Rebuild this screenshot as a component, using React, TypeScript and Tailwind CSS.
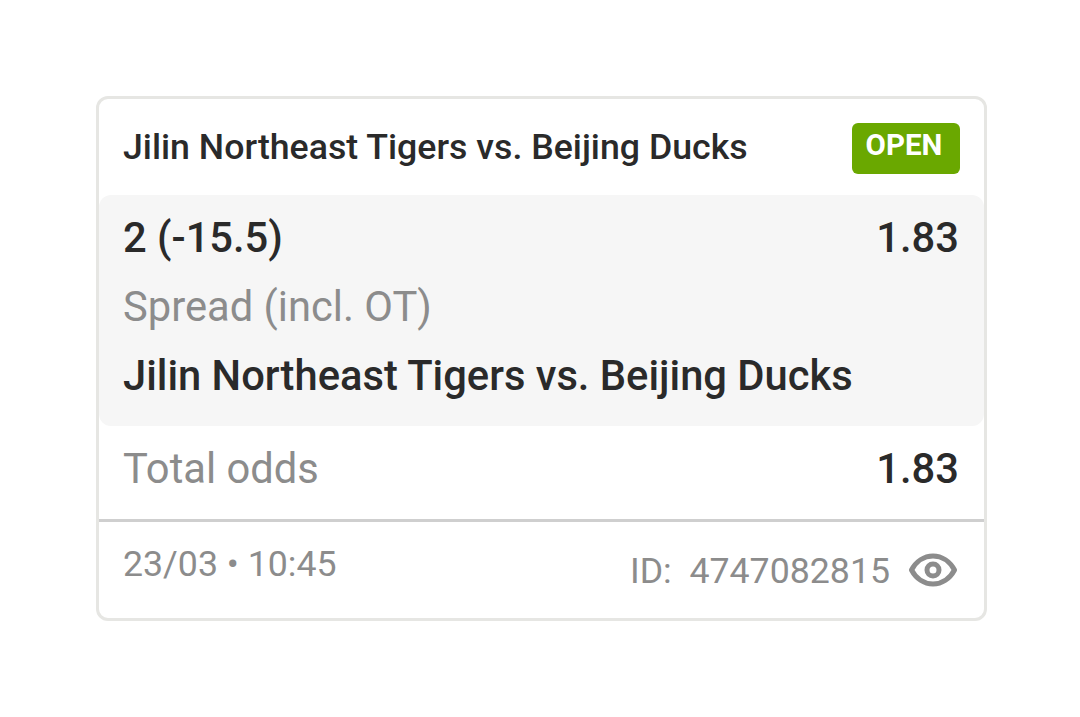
export default function App() {
  return (
    <div className="h-[717px] w-[1080px] bg-white pt-[96px] pl-[96px] font-['Roboto',sans-serif]">
      <div className="w-[891px] h-[525px] rounded-[12px] border-[3px] border-[#e6e6e3] bg-white flex flex-col">
        <div className="h-[96px] shrink-0 flex items-center justify-between pl-[24px] pr-[24px]">
          <span className="text-[35.7px] leading-[40px] font-medium text-[#2a2a2a]">Jilin Northeast Tigers vs. Beijing Ducks</span>
          <span className="mt-[2px] h-[51px] w-[108px] rounded-[6px] bg-[#6aa800] text-white text-[29.5px] font-bold flex items-center justify-center pb-[5px] pr-[4px]">OPEN</span>
        </div>
        <div className="h-[231px] shrink-0 rounded-[12px] bg-[#f6f6f6] pl-[24px] pr-[25px] pt-[19px]">
          <div className="flex justify-between text-[41.7px] leading-[48px] font-medium text-[#2a2a2a]">
            <span>2 (-15.5)</span>
            <span>1.83</span>
          </div>
          <div className="mt-[21px] text-[41.7px] leading-[48px] text-[#8c8c8c]">Spread (incl. OT)</div>
          <div className="mt-[21px] text-[41.7px] leading-[48px] font-medium text-[#2a2a2a]">Jilin Northeast Tigers vs. Beijing Ducks</div>
        </div>
        <div className="flex-1 flex items-center justify-between pl-[24px] pr-[25px] pb-[7px]">
          <span className="text-[41.7px] leading-[48px] text-[#8c8c8c]">Total odds</span>
          <span className="text-[41.7px] leading-[48px] font-medium text-[#2a2a2a]">1.83</span>
        </div>
        <div className="h-[99px] shrink-0 border-t-[3px] border-[#cfcfcf] flex items-center justify-between pl-[24px] pr-[27px] pt-[4px]">
          <span className="text-[35.7px] text-[#8c8c8c] pb-[14px]">23/03 • 10:45</span>
          <div className="flex items-center gap-[19px] text-[35.7px] text-[#8c8c8c]">
            <span className="whitespace-pre">ID:  4747082815</span>
            <svg className="-mt-[3px]" width="48" height="34" viewBox="0 0 48 34" fill="none" stroke="#8c8c8c">
              <path d="M2.5 17C7 8.500 15 3 24 3s17 5.500 21.500 14C41 25.500 33 31 24 31S7 25.500 2.500 17Z" strokeWidth="5" strokeLinejoin="round" />
              <circle cx="24" cy="17" r="6" strokeWidth="5" />
            </svg>
          </div>
        </div>
      </div>
    </div>
  )
}
